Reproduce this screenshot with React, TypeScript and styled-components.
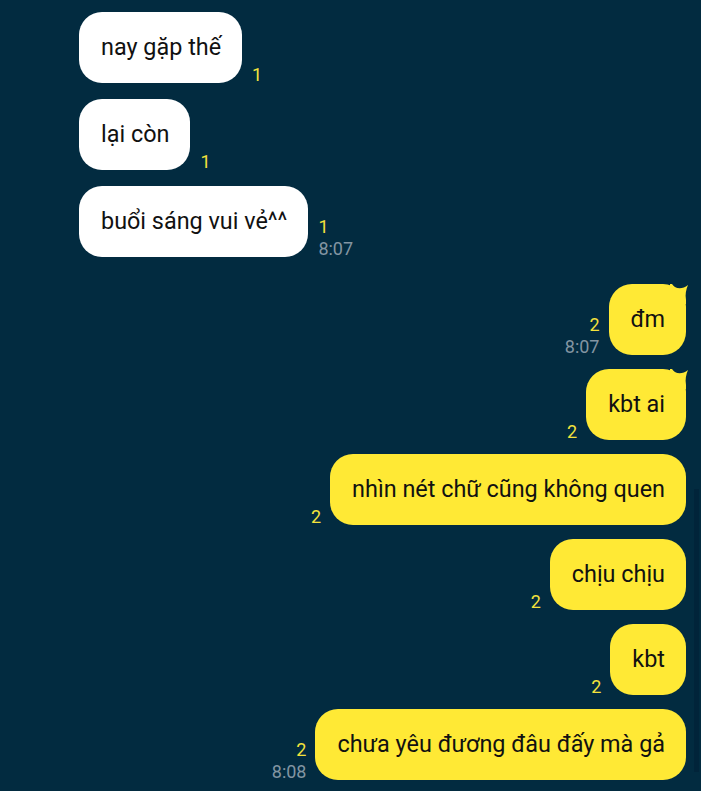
import React from "react";
import styled, { createGlobalStyle } from "styled-components";

const Global = createGlobalStyle`
  html, body { margin: 0; padding: 0; background: #022b40; }
  body { font-family: Roboto, "Noto Sans", sans-serif; overflow: hidden; }
`;

const Screen = styled.div`
  position: relative;
  width: 701px;
  height: 791px;
  background: #022b40;
  overflow: hidden;
  box-sizing: border-box;
  padding-top: 12px;
  display: flex;
  flex-direction: column;
`;

const Group = styled.div<{ $side: "in" | "out" }>`
  display: flex;
  flex-direction: column;
  gap: ${(p) => (p.$side === "in" ? "16px" : "14px")};
  padding: ${(p) => (p.$side === "in" ? "0 0 0 79px" : "0 15px 0 0")};
  align-items: ${(p) => (p.$side === "in" ? "flex-start" : "flex-end")};
  & + & { margin-top: 27px; }
`;

const Row = styled.div<{ $side: "in" | "out" }>`
  display: flex;
  flex-direction: ${(p) => (p.$side === "in" ? "row" : "row-reverse")};
  align-items: flex-end;
  gap: ${(p) => (p.$side === "in" ? "10px" : "9px")};
`;

const Bubble = styled.div<{ $side: "in" | "out" }>`
  position: relative;
  background: ${(p) => (p.$side === "in" ? "#ffffff" : "#ffe935")};
  color: #111;
  font-size: 23.4px;
  line-height: 27px;
  padding: 22px 21px 22px 22px;
  border-radius: 23px;
  white-space: nowrap;
`;

const Tail = styled.svg`
  position: absolute;
  top: 0;
  right: -4px;
  width: 20px;
  height: 20px;
`;

const Meta = styled.div<{ $side: "in" | "out" }>`
  display: flex;
  flex-direction: column;
  align-items: ${(p) => (p.$side === "in" ? "flex-start" : "flex-end")};
  gap: 5px;
  font-size: 18px;
  line-height: 17px;
`;

const Count = styled.span`
  color: #f3e23c;
`;

const Time = styled.span`
  color: #8295a2;
`;

const ScrollThumb = styled.div`
  position: absolute;
  right: 2px;
  top: 489px;
  width: 5px;
  height: 283px;
  background: #01243a;
`;

type Msg = { text: string; count: string; time?: string; tail?: boolean };

const incoming: Msg[] = [
  { text: "nay gặp thế", count: "1" },
  { text: "lại còn", count: "1" },
  { text: "buổi sáng vui vẻ^^", count: "1", time: "8:07" },
];

const outgoing: Msg[] = [
  { text: "đm", count: "2", time: "8:07", tail: true },
  { text: "kbt ai", count: "2", tail: true },
  { text: "nhìn nét chữ cũng không quen", count: "2" },
  { text: "chịu chịu", count: "2" },
  { text: "kbt", count: "2" },
  { text: "chưa yêu đương đâu đấy mà gả", count: "2", time: "8:08" },
];

const Message: React.FC<{ m: Msg; side: "in" | "out" }> = ({ m, side }) => (
  <Row $side={side}>
    <Bubble $side={side}>
      {m.text}
      {m.tail && (
        <Tail viewBox="0 0 20 20">
          <path
            d="M0 0 L2 0 C5 5 12 6 18 1 C16 6 15 10 16 16 V20 H0 Z"
            fill="#ffe935"
          />
        </Tail>
      )}
    </Bubble>
    <Meta $side={side}>
      <Count>{m.count}</Count>
      {m.time && <Time>{m.time}</Time>}
    </Meta>
  </Row>
);

export default function App() {
  return (
    <Screen>
      <Global />
      <Group $side="in">
        {incoming.map((m, i) => (
          <Message key={i} m={m} side="in" />
        ))}
      </Group>
      <Group $side="out">
        {outgoing.map((m, i) => (
          <Message key={i} m={m} side="out" />
        ))}
      </Group>
      <ScrollThumb />
    </Screen>
  );
}
